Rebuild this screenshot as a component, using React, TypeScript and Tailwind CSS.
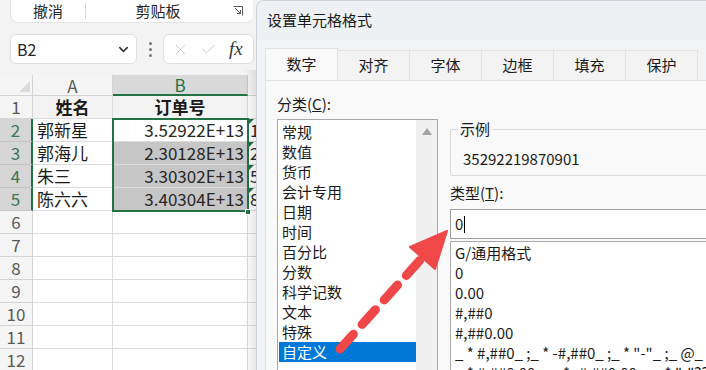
import React from "react";
import { X, Check, ChevronDown } from "lucide-react";

const font = { fontFamily: '"Noto Sans CJK SC", "Noto Sans", sans-serif' };

const cats = ["常规", "数值", "货币", "会计专用", "日期", "时间", "百分比", "分数", "科学记数", "文本", "特殊", "自定义"];
const types = [
  "G/通用格式",
  "0",
  "0.00",
  "#,##0",
  "#,##0.00",
  '_ * #,##0_ ;_ * -#,##0_ ;_ * "-"_ ;_ @_ ',
  '_ * #,##0.00_ ;_ * -#,##0.00_ ;_ * "-"??_ ;_ @_ ',
];

const data: [string, string, string][] = [
  ["郭新星", "3.52922E+13", "1"],
  ["郭海儿", "2.30128E+13", "2"],
  ["朱三", "3.30302E+13", "5"],
  ["陈六六", "3.40304E+13", "8"],
];

function Sheet() {
  const empty = [6, 7, 8, 9, 10, 11, 12];
  return (
    <div className="relative flex flex-col">
      {/* header row */}
      <div className="flex h-[21px] shrink-0">
        <div className="w-[33px] bg-[#f5f5f5] border-r border-b border-[#d4d4d4] relative">
          <svg className="absolute left-[19px] top-[6px]" width="11" height="11" viewBox="0 0 11 11">
            <polygon points="11,0 11,11 0,11" fill="#dadada" />
          </svg>
        </div>
        <div className="w-[80px] bg-[#f5f5f5] border-r border-b border-[#d4d4d4] text-center text-[#595959] text-[17px] leading-[21px]">A</div>
        <div className="w-[135px] bg-[#d9d9d9] border-r border-[#c8c8c8] border-b-2 border-b-[#217346] text-center text-[#217346] text-[17px] leading-[20px]">B</div>
        <div className="w-[8px] bg-[#f5f5f5] border-b border-[#d4d4d4]" />
      </div>
      {/* row 1 */}
      <div className="flex h-[23px] shrink-0">
        <div className="w-[33px] bg-[#f5f5f5] border-r border-b border-[#d4d4d4] text-center text-[#595959] text-[17px] leading-[22px]">1</div>
        <div className="w-[80px] border-r border-b border-[#dcdcdc] text-center font-bold text-[17px] leading-[22px] text-[#1a1a1a]">姓名</div>
        <div className="w-[135px] border-r border-b border-[#dcdcdc] text-center font-bold text-[17px] leading-[22px] text-[#1a1a1a]">订单号</div>
        <div className="w-[8px] border-b border-[#dcdcdc] bg-white" />
      </div>
      {data.map((r, i) => (
        <div key={i} className="flex h-[23px] shrink-0">
          <div className="w-[33px] bg-[#d6d6d6] border-r-2 border-r-[#217346] border-b border-[#c4c4c4] text-center text-[#3d7555] text-[17px] leading-[22px]">{i + 2}</div>
          <div className="w-[80px] border-r border-b border-[#dcdcdc] pl-[4px] text-[17px] leading-[22px] text-[#1a1a1a] bg-white">{r[0]}</div>
          <div className={`w-[135px] border-r border-b border-[#dcdcdc] pr-[3px] text-right text-[17px] leading-[22px] text-[#262626] ${i === 0 ? "bg-white" : "bg-[#c6c6c6]"}`}>{r[1]}</div>
          <div className="w-[8px] border-b border-[#dcdcdc] bg-white relative overflow-hidden pl-[2px] text-[17px] leading-[22px] text-[#262626]">
            <svg className="absolute left-0 top-0" width="6" height="6" viewBox="0 0 6 6">
              <polygon points="0,0 6,0 0,6" fill="#1e7145" />
            </svg>
            {r[2]}
          </div>
        </div>
      ))}
      {empty.map((n) => (
        <div key={n} className="flex h-[23px] shrink-0">
          <div className="w-[33px] bg-[#f5f5f5] border-r border-b border-[#d4d4d4] text-center text-[#595959] text-[17px] leading-[22px]">{n}</div>
          <div className="w-[80px] border-r border-b border-[#dcdcdc] bg-white" />
          <div className="w-[135px] border-r border-b border-[#dcdcdc] bg-white" />
          <div className="w-[8px] border-b border-[#dcdcdc] bg-white" />
        </div>
      ))}
      {/* selection overlay */}
      <div className="absolute left-[112px] top-[43px] w-[137px] h-[94px] border-2 border-[#217346] pointer-events-none" />
      <div className="absolute left-[245px] top-[134px] w-[6px] h-[6px] bg-[#217346] border border-white pointer-events-none" />
    </div>
  );
}

function Excel() {
  return (
    <div className="w-[256px] h-full bg-[#f3f3f3] flex flex-col relative overflow-hidden shrink-0">
      {/* ribbon */}
      <div className="h-[23px] ml-[10px] mr-[3px] bg-white rounded-b-lg border-b border-l border-[#e4e4e4] flex items-center text-[15px] text-[#262626] shrink-0">
        <span className="w-[74px] text-center leading-[20px]">撤消</span>
        <div className="w-px h-[16px] bg-[#d8d8d8]" />
        <span className="w-[144px] text-center leading-[20px]">剪贴板</span>
        <svg width="10" height="10" viewBox="0 0 10 10" className="ml-[3px]">
          <path d="M0.5 0.5H9.5V9.5" fill="none" stroke="#555" strokeWidth="1" />
          <path d="M2 2L7.5 7.5M7.5 4V7.5H4" fill="none" stroke="#555" strokeWidth="1" />
        </svg>
      </div>
      {/* formula row */}
      <div className="flex items-center h-[30px] mt-[11px] ml-[10px] shrink-0">
        <div className="w-[127px] h-[30px] bg-white border border-[#e0e0e0] rounded-md flex items-center pl-[6px] pr-[5px] text-[16px] text-[#262626]">
          <span className="flex-1">B2</span>
          <ChevronDown size={15} strokeWidth={2.4} color="#333" />
        </div>
        <div className="w-[26px] flex flex-col items-center gap-[3px]">
          <div className="w-[3px] h-[3px] rounded-full bg-[#777]" />
          <div className="w-[3px] h-[3px] rounded-full bg-[#777]" />
          <div className="w-[3px] h-[3px] rounded-full bg-[#777]" />
        </div>
        <div className="w-[91px] h-[30px] bg-white border border-[#e0e0e0] rounded-md flex items-center pl-[8px]">
          <X size={17} strokeWidth={1.3} color="#c4c4c4" />
          <Check size={17} strokeWidth={1.3} color="#c4c4c4" className="ml-[11px]" />
          <span className="ml-[12px] italic text-[19px] text-[#333]" style={{ fontFamily: '"Liberation Serif", serif' }}>fx</span>
        </div>
      </div>
      <div className="mt-[11px]">
        <Sheet />
      </div>
      <div className="absolute right-0 top-[70px] bottom-0 w-[12px] bg-linear-to-r from-transparent to-[rgba(0,0,0,0.09)] pointer-events-none" />
    </div>
  );
}

function Dialog() {
  const tabs = ["数字", "对齐", "字体", "边框", "填充", "保护"];
  return (
    <div className="flex-1 h-full bg-[#f3f4f6] rounded-tl-[8px] border-l border-t border-[#cfd2d6] flex flex-col overflow-hidden">
      <div className="h-[39px] shrink-0 flex items-center pl-[10px] text-[15px] text-[#1a1a1a] bg-[#eef1f4]">设置单元格格式</div>
      <div className="h-[40px] shrink-0 flex items-end pl-[8px] bg-[#f2f3f5]">
        {tabs.map((t, i) =>
          i === 0 ? (
            <div key={t} className="w-[73px] h-[32px] bg-[#f9f9f9] border-l border-t border-r border-[#e2e2e2] flex items-center justify-center text-[15px] text-[#1a1a1a]">{t}</div>
          ) : (
            <div key={t} className="w-[72px] h-[30px] bg-[#f3f3f3] border-t border-r border-[#e4e4e4] flex items-center justify-center text-[15px] text-[#1a1a1a]">{t}</div>
          )
        )}
      </div>
      <div className="flex-1 ml-[8px] bg-[#f9f9f9] border-t border-l border-[#e2e2e2] flex pl-[11px] pt-[13px] gap-[12px]">
        {/* left column */}
        <div className="w-[161px] shrink-0 flex flex-col">
          <div className="h-[20px] leading-[20px] text-[15px] text-[#1a1a1a]">分类(<span className="underline">C</span>):</div>
          <div className="mt-[5px] flex-1 bg-white border border-[#a9a9a9] flex">
            <div className="flex-1 pt-[2px] pl-px">
              {cats.map((c, i) => (
                <div
                  key={c}
                  className={`h-[20px] leading-[20px] pl-[3px] text-[15px] ${i === cats.length - 1 ? "bg-[#0078d7] text-white" : "text-[#1a1a1a]"}`}
                >
                  {c}
                </div>
              ))}
            </div>
            <div className="w-[21px] bg-[#f0f0f0] flex justify-center pt-[8px]">
              <svg width="10" height="7" viewBox="0 0 10 7">
                <polygon points="5,0 10,7 0,7" fill="#a3a3a3" />
              </svg>
            </div>
          </div>
        </div>
        {/* right column */}
        <div className="w-[300px] shrink-0 flex flex-col">
          <fieldset className="mt-[25px] h-[57px] border border-[#dcdcdc] rounded-[2px] pl-[12px] pr-[8px]">
            <legend className="text-[15px] leading-[20px] text-[#1a1a1a] px-[2px] -ml-[5px]">示例</legend>
            <div className="text-[15px] leading-[20px] text-[#1a1a1a] mt-[10px]">35292219870901</div>
          </fieldset>
          <div className="mt-[7px] h-[20px] leading-[20px] text-[15px] text-[#1a1a1a]">类型(<span className="underline">T</span>):</div>
          <div className="mt-[6px] h-[30px] bg-white border border-[#a0a0a0] flex items-center pl-[4px] text-[15px] text-[#1a1a1a]">
            <span>0</span>
            <span className="w-px h-[17px] bg-black ml-[1px]" />
          </div>
          <div className="mt-[2px] flex-1 bg-white border border-[#a9a9a9] pt-px pl-[4px]">
            {types.map((t) => (
              <div key={t} className="h-[20px] leading-[20px] text-[15px] text-[#1a1a1a] whitespace-pre">{t}</div>
            ))}
          </div>
        </div>
      </div>
    </div>
  );
}

export default function App() {
  return (
    <div className="w-[706px] h-[370px] relative overflow-hidden flex bg-[#f3f3f3]" style={font}>
      <Excel />
      <Dialog />
      <svg className="absolute left-0 top-0 pointer-events-none" width="706" height="370" viewBox="0 0 706 370">
        <line x1="340" y1="349" x2="422" y2="258" stroke="#f04848" strokeWidth="9" strokeLinecap="round" strokeDasharray="20 13" />
        <polygon points="447,231 410,247 435,269" fill="#f04848" stroke="#f04848" strokeWidth="2" strokeLinejoin="round" />
      </svg>
    </div>
  );
}
